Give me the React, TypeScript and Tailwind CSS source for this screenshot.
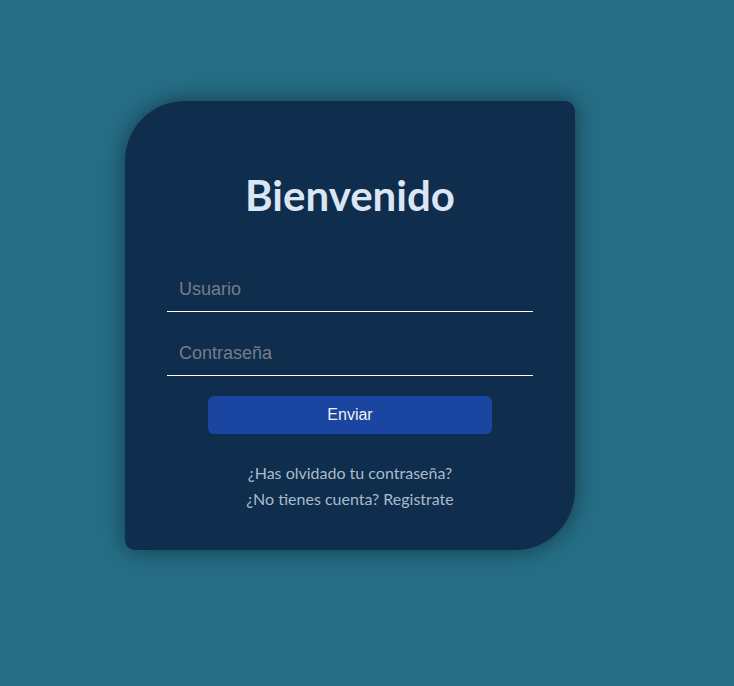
export default function App() {
  return (
    <div className="min-h-screen w-full bg-[#256d85] pl-[125px] pt-[101px]">
      <div className="w-[450px] h-[449px] bg-[#0f2d4d] rounded-tl-[60px] rounded-br-[60px] rounded-tr-[10px] rounded-bl-[10px] shadow-[0_0_22px_rgba(0,0,0,0.45)] px-[42px] pt-[70px] flex flex-col">
        <h1 className="text-center text-[42px] leading-[48px] font-bold text-[#dbe5f3] font-['Trebuchet_MS','Lato','Open_Sans',sans-serif]">
          Bienvenido
        </h1>
        <div className="mt-[53px] flex flex-col font-['Liberation_Sans',Arial,sans-serif]">
          <input
            placeholder="Usuario"
            className="h-[40px] bg-transparent border-b border-white px-[12px] pb-[4px] text-[18px] text-white placeholder:text-[#757e88] outline-none"
          />
          <input
            placeholder="Contraseña"
            type="password"
            className="mt-[24px] h-[40px] bg-transparent border-b border-white px-[12px] pb-[4px] text-[18px] text-white placeholder:text-[#757e88] outline-none"
          />
          <button className="mt-[20px] mx-auto w-[284px] h-[38px] rounded-[6px] bg-[#1a45a0] text-[16px] text-[#f2f2f2]">
            Enviar
          </button>
          <div className="mt-[26px] flex flex-col items-center text-[16px] leading-[26px] text-[#a8bccc] font-['Trebuchet_MS','Lato','Open_Sans',sans-serif]">
            <a href="#">¿Has olvidado tu contraseña?</a>
            <a href="#">¿No tienes cuenta? Registrate</a>
          </div>
        </div>
      </div>
    </div>
  );
}
